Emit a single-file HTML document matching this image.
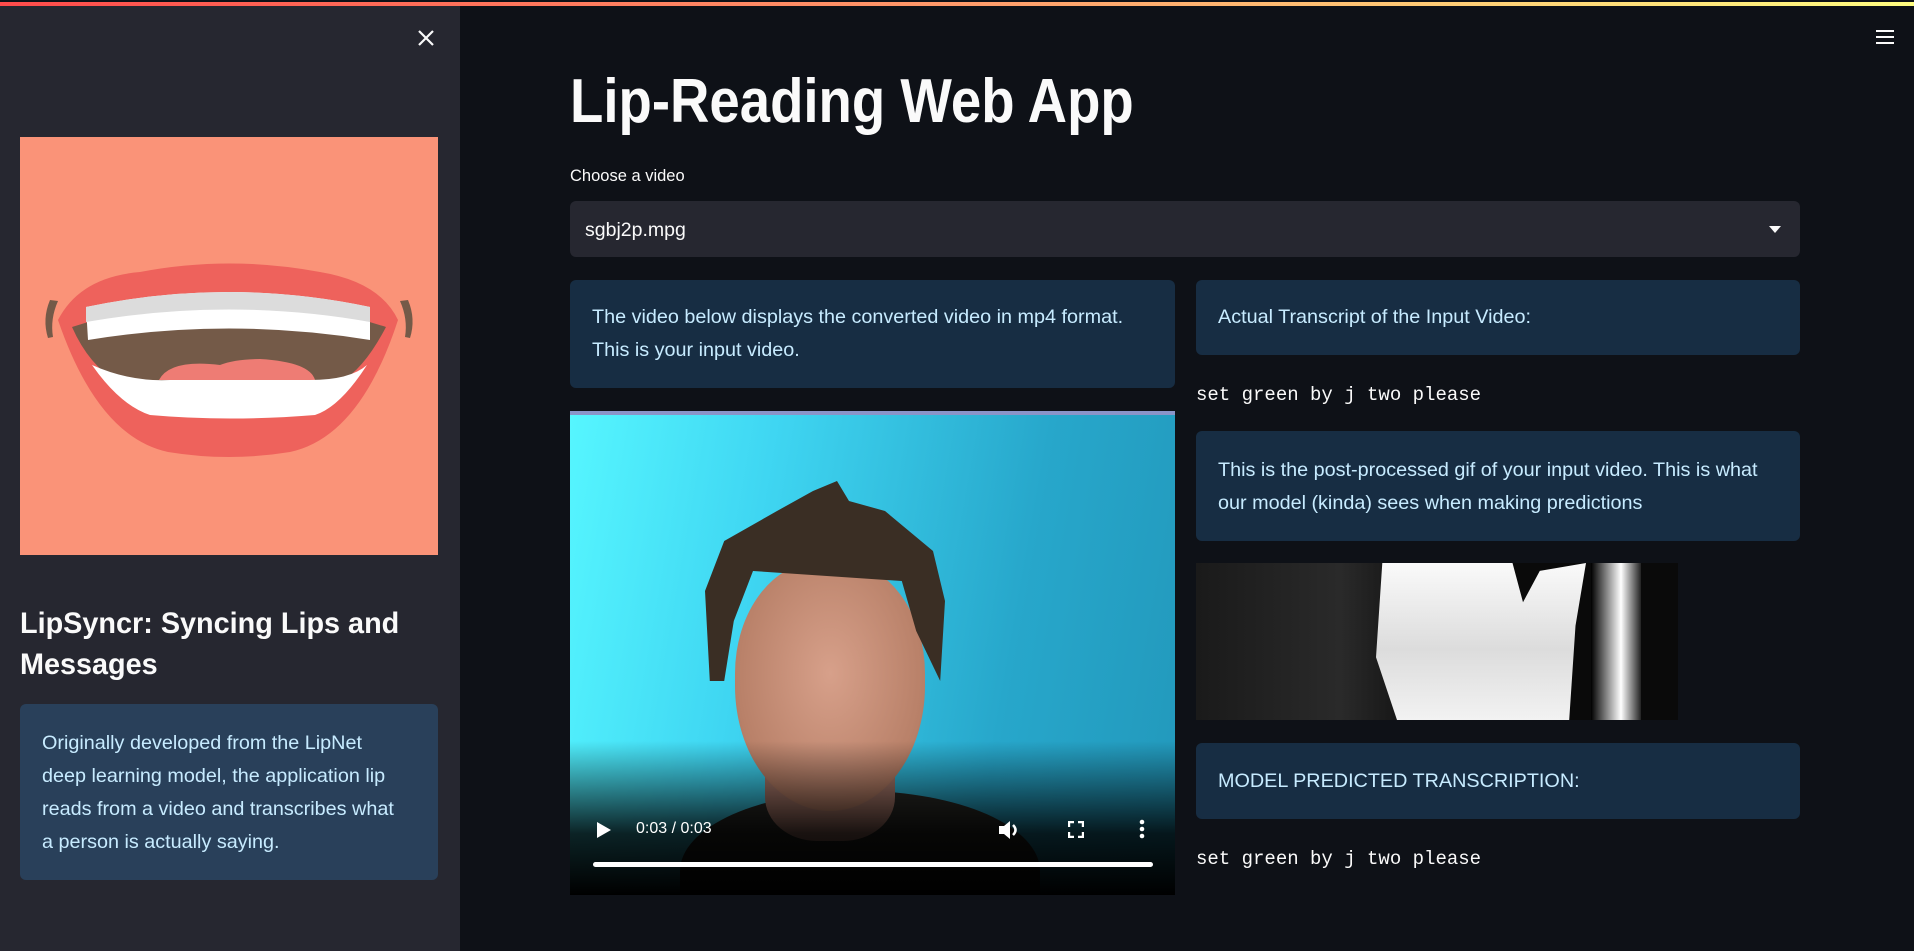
<!DOCTYPE html>
<html><head><meta charset="utf-8"><style>
*{margin:0;padding:0;box-sizing:border-box}
body{width:1914px;height:951px;background:#0e1117;font-family:"Liberation Sans",sans-serif;color:#fafafa;position:relative;overflow:hidden}
.abs{position:absolute}
.info{position:absolute;background:#172d43;border-radius:6px;color:#c7ebff;font-size:19.8px;line-height:33px;padding:0 22px;white-space:nowrap}
.mono{position:absolute;font-family:"Liberation Mono",monospace;font-size:19px;color:#fafafa;white-space:nowrap}
</style></head><body>
<div class="abs" style="left:0;top:0;width:1914px;height:5px;background:#0e1117"></div>
<div class="abs" style="left:0;top:2px;width:1914px;height:4px;background:linear-gradient(90deg,#ff4b4b,#ff9a6a 50%,#fffd80)"></div>
<!-- sidebar -->
<div class="abs" style="left:0;top:6px;width:460px;height:945px;background:#262730"></div>
<svg class="abs" style="left:417px;top:29px" width="18" height="18" viewBox="0 0 18 18"><path d="M2 2L16 16M16 2L2 16" stroke="#fafafa" stroke-width="2.2"/></svg>
<svg class="abs" style="left:20px;top:137px" width="418" height="418" viewBox="0 0 418 418">
<rect width="418" height="418" fill="#fa9378"/>
<path d="M38 183 Q60 140 120 135 Q209 118 300 135 Q360 145 378 183 Q340 300 270 315 Q209 325 148 315 Q78 300 38 183Z" fill="#ee625c"/>
<path d="M52 190 Q120 168 209 165 Q300 168 366 190 Q340 240 310 250 Q209 262 108 250 Q72 235 52 190Z" fill="#745a48"/>
<path d="M66 170 Q209 140 350 170 L350 203 Q209 180 68 203Z" fill="#fff"/>
<path d="M66 170 Q209 140 350 170 L350 185 Q209 160 66 185Z" fill="#dcdcdc"/>
<path d="M139 243 Q150 222 200 228 Q215 222 240 222 Q290 225 295 243Z" fill="#ee7c74"/>
<path d="M72 228 Q110 245 150 243 L290 243 Q330 243 347 228 Q320 270 295 278 Q209 285 130 278 Q100 268 72 228Z" fill="#fff"/>
<path d="M30 163 Q22 182 28 201 L33 200 Q30 182 38 164Z" fill="#745a48"/>
<path d="M388 163 Q396 182 390 201 L385 200 Q388 182 380 164Z" fill="#745a48"/>
</svg>
<div class="abs" style="left:20px;top:603px;font-size:30px;font-weight:bold;line-height:41px;transform:scaleX(0.96);transform-origin:left;white-space:nowrap">LipSyncr: Syncing Lips and<br>Messages</div>
<div class="abs" style="left:20px;top:704px;width:418px;height:176px;background:#29405a;border-radius:6px"></div>
<div class="abs" style="left:42px;top:727px;color:#c7ebff;font-size:19.8px;line-height:33px;white-space:nowrap">Originally developed from the LipNet<br>deep learning model, the application lip<br>reads from a video and transcribes what<br>a person is actually saying.</div>
<!-- hamburger -->
<svg class="abs" style="left:1875px;top:29px" width="20" height="16"><path d="M1 2H19M1 8H19M1 14H19" stroke="#fafafa" stroke-width="2"/></svg>
<!-- main -->
<div class="abs" style="left:570px;top:66px;font-size:62px;font-weight:bold;transform:scaleX(0.88);transform-origin:left;white-space:nowrap">Lip-Reading Web App</div>
<div class="abs" style="left:570px;top:167px;font-size:16.5px">Choose a video</div>
<div class="abs" style="left:570px;top:201px;width:1230px;height:56px;background:#262730;border-radius:6px"></div>
<div class="abs" style="left:585px;top:219px;font-size:19.5px">sgbj2p.mpg</div>
<svg class="abs" style="left:1768px;top:225px" width="14" height="9"><path d="M1 1H13L7 8Z" fill="#fafafa"/></svg>
<div class="info" style="left:570px;top:280px;width:605px;height:108px;padding-top:21px">The video below displays the converted video in mp4 format.<br>This is your input video.</div>
<!-- video -->
<div class="abs" style="left:570px;top:411px;width:605px;height:484px;overflow:hidden;background:linear-gradient(100deg,#56f6ff 0%,#3fd6f2 30%,#27a7cb 70%,#2298bb 100%)">
<div class="abs" style="left:0;top:0;width:605px;height:4px;background:#8a94c8"></div>
<div class="abs" style="left:110px;top:380px;width:360px;height:160px;border-radius:50% 50% 0 0;background:#2a2a26"></div>
<div class="abs" style="left:195px;top:320px;width:130px;height:110px;background:#a8786a;border-radius:0 0 40% 40%"></div>
<div class="abs" style="left:165px;top:150px;width:190px;height:250px;border-radius:45% 45% 50% 50%;background:radial-gradient(ellipse at 50% 45%,#d7a08a,#b88068 70%,#8a5a48)"></div>
<div class="abs" style="left:135px;top:70px;width:240px;height:200px;background:#3a2e24;clip-path:polygon(2% 100%,0 55%,8% 30%,30% 15%,45% 5%,55% 0,60% 10%,75% 15%,95% 35%,100% 60%,98% 100%,88% 75%,82% 50%,20% 45%,12% 70%,8% 100%)"></div>
<div class="abs" style="left:0;top:330px;width:605px;height:154px;background:linear-gradient(180deg,rgba(0,0,0,0),rgba(0,0,0,.85) 60%,#000)"></div>
</div>
<svg class="abs" style="left:597px;top:822px" width="14" height="16"><path d="M0 0L14 8L0 16Z" fill="#fff"/></svg>
<div class="abs" style="left:636px;top:820px;font-size:16px;color:#fff">0:03 / 0:03</div>
<svg class="abs" style="left:999px;top:820px" width="24" height="20"><path d="M0 6H5L11 1V19L5 14H0Z" fill="#fff"/><path d="M14 5Q19 10 14 15" stroke="#fff" stroke-width="2.5" fill="none"/></svg>
<svg class="abs" style="left:1068px;top:821px" width="16" height="17"><path d="M1 6V1H6M10 1H15V6M15 11V16H10M6 16H1V11" stroke="#fff" stroke-width="2.4" fill="none"/></svg>
<svg class="abs" style="left:1139px;top:819px" width="6" height="20"><circle cx="3" cy="3" r="2.3" fill="#fff"/><circle cx="3" cy="10" r="2.3" fill="#fff"/><circle cx="3" cy="17" r="2.3" fill="#fff"/></svg>
<div class="abs" style="left:593px;top:862px;width:560px;height:5px;background:#fff;border-radius:3px"></div>
<!-- right column -->
<div class="info" style="left:1196px;top:280px;width:604px;height:75px;padding-top:21px">Actual Transcript of the Input Video:</div>
<div class="mono" style="left:1196px;top:384px">set green by j two please</div>
<div class="info" style="left:1196px;top:431px;width:604px;height:110px;padding-top:23px">This is the post-processed gif of your input video. This is what<br>our model (kinda) sees when making predictions</div>
<div class="abs" style="left:1196px;top:563px;width:482px;height:157px;overflow:hidden;background:linear-gradient(90deg,#1a1a1a,#2a2a2a 30%,#0a0a0a 50%)">
<div class="abs" style="left:180px;top:0;width:210px;height:157px;background:linear-gradient(180deg,#fafafa,#dcdcdc 55%,#f2f2f2);clip-path:polygon(3% 0,65% 0,70% 25%,78% 5%,100% 0,95% 40%,92% 100%,10% 100%,0 60%)"></div>
<div class="abs" style="left:395px;top:0;width:50px;height:157px;background:linear-gradient(90deg,#000,#fff 60%,#222)"></div>
</div>
<div class="info" style="left:1196px;top:743px;width:604px;height:76px;padding-top:22px">MODEL PREDICTED TRANSCRIPTION:</div>
<div class="mono" style="left:1196px;top:848px">set green by j two please</div>
</body></html>
